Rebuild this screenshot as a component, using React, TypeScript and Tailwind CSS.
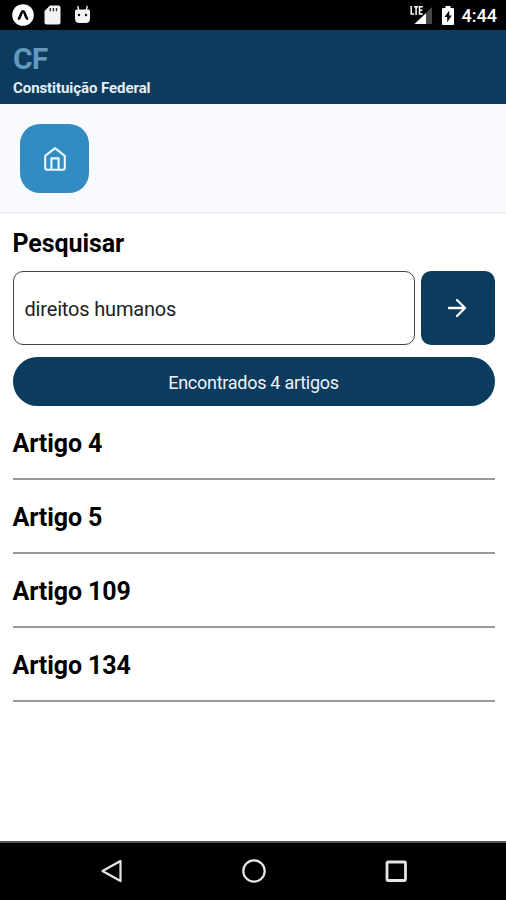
import { useState } from "react";

interface Artigo {
  numero: number;
}

const artigos: Artigo[] = [{ numero: 4 }, { numero: 5 }, { numero: 109 }, { numero: 134 }];

function StatusBar() {
  return (
    <div className="flex h-[30px] shrink-0 items-center justify-between bg-black pr-[9px] pl-3 text-white">
      <div className="flex items-center">
        <svg width="22" height="22" viewBox="0 0 22 22">
          <circle cx="11" cy="11" r="10.8" fill="#fff" />
          <path
            d="M6.9 14.6C8.7 12.8 9.2 7.2 11 7.2s2.3 5.6 4.1 7.4"
            fill="none"
            stroke="#000"
            strokeWidth="2.6"
            strokeLinecap="round"
          />
        </svg>
        <svg className="ml-[10px]" width="17" height="20" viewBox="0 0 17 20">
          <path
            d="M6 0.5h8.5a2 2 0 0 1 2 2v15a2 2 0 0 1-2 2h-12a2 2 0 0 1-2-2V6z"
            fill="#f3f3f3"
          />
          <path d="M6.3 3v3.2M9.4 3v3.2M12.5 3v3.2" stroke="#333" strokeWidth="1.4" />
        </svg>
        <svg className="ml-[13px]" width="17" height="20" viewBox="0 0 17 20">
          <path d="M3.7 0.8l1 4.5M13.3 0.8l-1 4.5" stroke="#f3f3f3" strokeWidth="1.4" />
          <path d="M1 6q0-1.5 1.5-1.5h12Q16 4.5 16 6v7.5q0 4.5-4.5 4.5h-6Q1 18 1 13.5z" fill="#f3f3f3" />
          <circle cx="5" cy="10" r="1.2" fill="#111" />
          <circle cx="12" cy="10" r="1.2" fill="#111" />
        </svg>
      </div>
      <div className="flex items-center">
        <svg width="23" height="20" viewBox="0 0 23 20">
          <path d="M22 2v17H4.5z" fill="#484848" />
          <path d="M16 8.2V19H4.5z" fill="#fff" />
          <path d="M0 0h13v8.5l-2 2H0z" fill="#000" />
          <path
            d="M1.2 1v8H4M4 1.8h4.2M6.1 1.8V10M12.8 1.8H9.5v7.3h3.3M9.5 5.3h2.8"
            fill="none"
            stroke="#fff"
            strokeWidth="1.5"
          />
        </svg>
        <svg className="ml-[9px]" width="12" height="19" viewBox="0 0 12 19">
          <path
            d="M3.5 0h5v2H11a1 1 0 0 1 1 1v15a1 1 0 0 1-1 1H1a1 1 0 0 1-1-1V3a1 1 0 0 1 1-1h2.5z"
            fill="#fff"
          />
          <path d="M7.2 4.5L2.5 11h2.7v5.2L9.8 9.4H7.2z" fill="#000" />
        </svg>
        <span className="mt-[2px] ml-2 text-[18px] leading-none font-medium">4:44</span>
      </div>
    </div>
  );
}

function Header() {
  return (
    <header className="h-[74px] shrink-0 bg-[#0b3c5d] px-[13px] pt-3">
      <h1 className="text-[30px] leading-[34px] font-bold tracking-[-0.8px] text-[#6699bd]">CF</h1>
      <p className="mt-[3px] text-[15px] leading-[18px] font-bold tracking-[-0.07px] text-[#e6edf5]">
        Constituição Federal
      </p>
    </header>
  );
}

function NavigationBar() {
  return (
    <nav className="flex h-[59px] shrink-0 items-center justify-between border-t-2 border-[#555] bg-black pr-[98px] pb-[2px] pl-[100px]">
      <svg width="24" height="26" viewBox="0 0 24 26">
        <path d="M20.5 3L2.5 13l18 10z" fill="none" stroke="#e6e6e6" strokeWidth="2.2" strokeLinejoin="round" />
      </svg>
      <svg width="26" height="26" viewBox="0 0 26 26">
        <circle cx="13" cy="13" r="10.7" fill="none" stroke="#e6e6e6" strokeWidth="2.2" />
      </svg>
      <svg width="24" height="24" viewBox="0 0 24 24">
        <rect x="3" y="3" width="18.5" height="18.5" rx="1" fill="none" stroke="#e6e6e6" strokeWidth="2.8" />
      </svg>
    </nav>
  );
}

export default function App() {
  const [busca, setBusca] = useState("direitos humanos");

  return (
    <div className="flex h-[900px] w-[506px] flex-col overflow-hidden bg-white font-[Roboto,sans-serif] text-black">
      <StatusBar />
      <Header />

      <div className="flex h-[109px] shrink-0 items-start border-b border-[#e0e1ec] bg-[#f8fafd] pt-[19.5px] pl-5">
        <button
          type="button"
          aria-label="Início"
          className="flex size-[69px] items-center justify-center rounded-[20px] bg-[#328cc1] pt-px"
        >
          <svg width="24" height="26" viewBox="0 0 24 26" fill="none" stroke="#edf7ff" strokeWidth="2.1">
            <path
              d="M2.2 9.8L12 2.2l9.8 7.6v12a2 2 0 0 1-2 2H4.2a2 2 0 0 1-2-2z"
              strokeLinejoin="round"
            />
            <path d="M8.4 23.5V12.4h7.2v11.1" strokeLinejoin="round" />
          </svg>
        </button>
      </div>

      <main className="flex flex-1 flex-col pt-[15px] pr-[11.5px] pl-[12.5px]">
        <h2 className="pt-px text-[25px] leading-[30px] font-bold tracking-[-0.1px]">Pesquisar</h2>

        <div className="mt-3 flex gap-[6px]">
          <input
            type="text"
            value={busca}
            onChange={(e) => setBusca(e.target.value)}
            className="h-[74px] min-w-0 flex-1 rounded-[10px] border border-[#444] px-[11px] pt-[2px] text-[20px] tracking-[-0.17px] text-[#222] outline-none"
          />
          <button
            type="button"
            aria-label="Buscar"
            className="flex h-[74px] w-[74px] shrink-0 items-center justify-center rounded-[10px] bg-[#0b3c5d] pr-px"
          >
            <svg
              width="20"
              height="20"
              viewBox="0 0 20 20"
              fill="none"
              stroke="#fff"
              strokeWidth="2.3"
              strokeLinecap="round"
              strokeLinejoin="round"
            >
              <path d="M2 10h16M10 2l8 8-8 8" />
            </svg>
          </button>
        </div>

        <div className="mt-3 flex h-[49px] items-center justify-center rounded-full bg-[#0b3c5d] pt-px text-[18px] tracking-[-0.27px] text-[#eef3f9]">
          Encontrados {artigos.length} artigos
        </div>

        <ul>
          {artigos.map((artigo) => (
            <li key={artigo.numero} className="flex h-[74px] items-center border-b-2 border-[#999] pt-[4px]">
              <span className="text-[25px] leading-[30px] font-bold tracking-[-0.1px]">
                Artigo {artigo.numero}
              </span>
            </li>
          ))}
        </ul>
      </main>

      <NavigationBar />
    </div>
  );
}
